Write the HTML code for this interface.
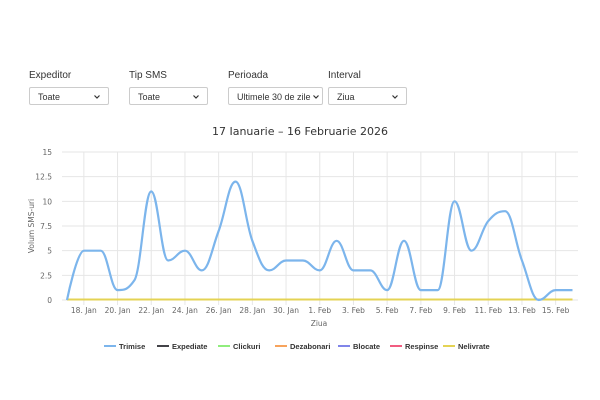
<!DOCTYPE html>
<html><head><meta charset="utf-8"><style>
body{margin:0;width:600px;height:400px;background:#fff;font-family:"Liberation Sans",Arial,sans-serif;position:relative;overflow:hidden}
.lb{position:absolute;top:70px;font-size:10px;color:#333}
.sel{position:absolute;top:87px;height:18px;border:1px solid #ccc;border-radius:2px;font-size:9px;color:#333;box-sizing:border-box;padding:4px 0 0 8px}
.sel svg{position:absolute;right:8px;top:7px}
</style></head><body>
<div class="lb" style="left:29px">Expeditor</div>
<div class="lb" style="left:129px">Tip SMS</div>
<div class="lb" style="left:228px">Perioada</div>
<div class="lb" style="left:328px">Interval</div>
<div class="sel" style="left:29px;width:80px">Toate<svg width="6" height="4"><path d="M0.5 0.5L3 3L5.5 0.5" stroke="#333" fill="none" stroke-width="1.2"/></svg></div>
<div class="sel" style="left:129px;width:79px">Toate<svg width="6" height="4"><path d="M0.5 0.5L3 3L5.5 0.5" stroke="#333" fill="none" stroke-width="1.2"/></svg></div>
<div class="sel" style="left:228px;width:95px;padding-left:8px">Ultimele 30 de zile<svg style="right:3px" width="6" height="4"><path d="M0.5 0.5L3 3L5.5 0.5" stroke="#333" fill="none" stroke-width="1.2"/></svg></div>
<div class="sel" style="left:328px;width:79px">Ziua<svg width="6" height="4"><path d="M0.5 0.5L3 3L5.5 0.5" stroke="#333" fill="none" stroke-width="1.2"/></svg></div>
<svg id="c" width="600" height="400" style="position:absolute;left:0;top:0" font-family="DejaVu Sans, Liberation Sans, sans-serif"></svg>
<script>
var s=document.getElementById('c'),h='';
var x0=67,dx=16.85,y0=300,dy=148/15;
h+='<text x="300" y="135" text-anchor="middle" font-size="11" fill="#333">17 Ianuarie – 16 Februarie 2026</text>';
for(var i=0;i<=6;i++){var y=y0-i*2.5*dy;h+='<line x1="62" x2="578" y1="'+y+'" y2="'+y+'" stroke="#e6e6e6" stroke-width="1"/>';
h+='<text x="52" y="'+(y+3)+'" text-anchor="end" font-size="7.5" fill="#666">'+[0,2.5,5,7.5,10,12.5,15][i]+'</text>';}
var labs=['18. Jan','20. Jan','22. Jan','24. Jan','26. Jan','28. Jan','30. Jan','1. Feb','3. Feb','5. Feb','7. Feb','9. Feb','11. Feb','13. Feb','15. Feb'];
for(var k=0;k<15;k++){var x=x0+(1+2*k)*dx;h+='<line x1="'+x+'" x2="'+x+'" y1="152" y2="305" stroke="#e6e6e6"/>';
h+='<text x="'+x+'" y="313" text-anchor="middle" font-size="7.5" fill="#666">'+labs[k]+'</text>';}
h+='<text x="319" y="326" text-anchor="middle" font-size="7.5" fill="#666">Ziua</text>';
h+='<text transform="translate(34,226) rotate(-90)" text-anchor="middle" font-size="7.5" fill="#666">Volum SMS-uri</text>';
var v=[0,5,5,1,2,11,4,5,3,7,12,6,3,4,4,3,6,3,3,1,6,1,1,10,5,8,9,4,0,1,1];
var P=v.map(function(a,i){return[x0+i*dx,y0-a*dy]});
var d='M'+P[0][0]+' '+P[0][1];
function cp(i){var sm=1.5,den=2.5,p=P[i],a=P[i-1],b=P[i+1];
var lx=(sm*p[0]+a[0])/den,ly=(sm*p[1]+a[1])/den,rx=(sm*p[0]+b[0])/den,ry=(sm*p[1]+b[1])/den;
var c=0;if(rx!==lx)c=((ry-ly)*(rx-p[0]))/(rx-lx)+p[1]-ry;ly+=c;ry+=c;
if(ly>a[1]&&ly>p[1]){ly=Math.max(a[1],p[1]);ry=2*p[1]-ly}else if(ly<a[1]&&ly<p[1]){ly=Math.min(a[1],p[1]);ry=2*p[1]-ly}
if(ry>b[1]&&ry>p[1]){ry=Math.max(b[1],p[1]);ly=2*p[1]-ry}else if(ry<b[1]&&ry<p[1]){ry=Math.min(b[1],p[1]);ly=2*p[1]-ry}
return[lx,ly,rx,ry];}
var C=[];for(var i=1;i<P.length-1;i++)C[i]=cp(i);
for(var i=1;i<P.length;i++){var a=P[i-1],p=P[i];var c1=i-1>0?[C[i-1][2],C[i-1][3]]:a;var c2=i<P.length-1?[C[i][0],C[i][1]]:p;
d+=' C'+c1[0]+' '+c1[1]+' '+c2[0]+' '+c2[1]+' '+p[0]+' '+p[1];}
h+='<line x1="67" x2="572.5" y1="299.5" y2="299.5" stroke="#e4d354" stroke-width="2"/>';
h+='<path d="'+d+'" fill="none" stroke="#7cb5ec" stroke-width="2.2"/>';
var L=[['Trimise',104,'#7cb5ec'],['Expediate',157,'#434348'],['Clickuri',218,'#90ed7d'],['Dezabonari',275,'#f7a35c'],['Blocate',338,'#8085e9'],['Respinse',390,'#f15c80'],['Nelivrate',443,'#e4d354']];
L.forEach(function(l){h+='<line x1="'+l[1]+'" x2="'+(l[1]+12)+'" y1="346" y2="346" stroke="'+l[2]+'" stroke-width="2"/><text x="'+(l[1]+15)+'" y="349" font-size="7.5" font-weight="bold" font-family="Liberation Sans, sans-serif" fill="#333">'+l[0]+'</text>';});
s.innerHTML=h;
</script>
</body></html>
